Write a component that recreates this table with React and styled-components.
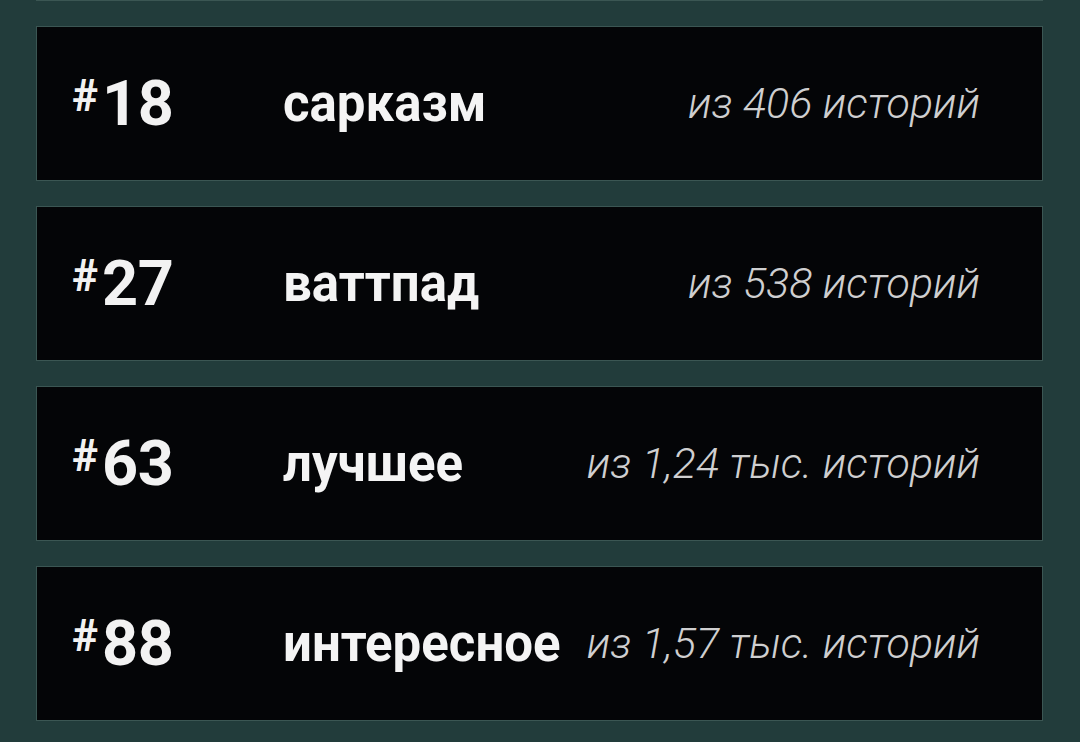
import React from "react";
import styled, { createGlobalStyle } from "styled-components";

const Global = createGlobalStyle`
  html, body { margin: 0; padding: 0; background: #223c3b; overflow: hidden; }
  body { font-family: Roboto, "Noto Sans", sans-serif; }
`;

const Page = styled.div`
  width: 1080px;
  height: 742px;
  overflow: hidden;
  background: #223c3b;
`;

const List = styled.div`
  display: flex;
  flex-direction: column;
  gap: 25px;
  margin-top: -154px;
  padding-left: 36px;
  width: 1007px;
`;

const Card = styled.div`
  box-sizing: border-box;
  height: 155px;
  background: #040507;
  border: 1px solid #3b5653;
  display: flex;
  align-items: center;
  padding: 0 62px 0 35px;
`;

const Rank = styled.div`
  width: 211px;
  flex: none;
  display: flex;
  align-items: flex-start;
  color: #f2f2f2;
  font-weight: 700;
`;

const Hash = styled.span`
  font-size: 44px;
  line-height: 1;
  margin-top: 2px;
  margin-right: 4px;
`;

const Num = styled.span`
  font-size: 63px;
  line-height: 1;
  letter-spacing: -0.5px;
`;

const Tag = styled.div`
  flex: 1;
  color: #f4f4f4;
  font-weight: 700;
  font-size: 51px;
  line-height: 1;
  white-space: nowrap;
`;

const Count = styled.div`
  color: #cfcfd0;
  font-style: italic;
  font-weight: 300;
  font-size: 43px;
  line-height: 1;
  white-space: nowrap;
`;

const rows = [
  { n: 18, tag: "сарказм", count: "из 406 историй" },
  { n: 27, tag: "ваттпад", count: "из 538 историй" },
  { n: 63, tag: "лучшее", count: "из 1,24 тыс. историй" },
  { n: 88, tag: "интересное", count: "из 1,57 тыс. историй" },
];

export default function App() {
  return (
    <Page>
      <Global />
      <List>
        <Card />
        {rows.map((r) => (
          <Card key={r.n}>
            <Rank>
              <Hash>#</Hash>
              <Num>{r.n}</Num>
            </Rank>
            <Tag>{r.tag}</Tag>
            <Count>{r.count}</Count>
          </Card>
        ))}
      </List>
    </Page>
  );
}
